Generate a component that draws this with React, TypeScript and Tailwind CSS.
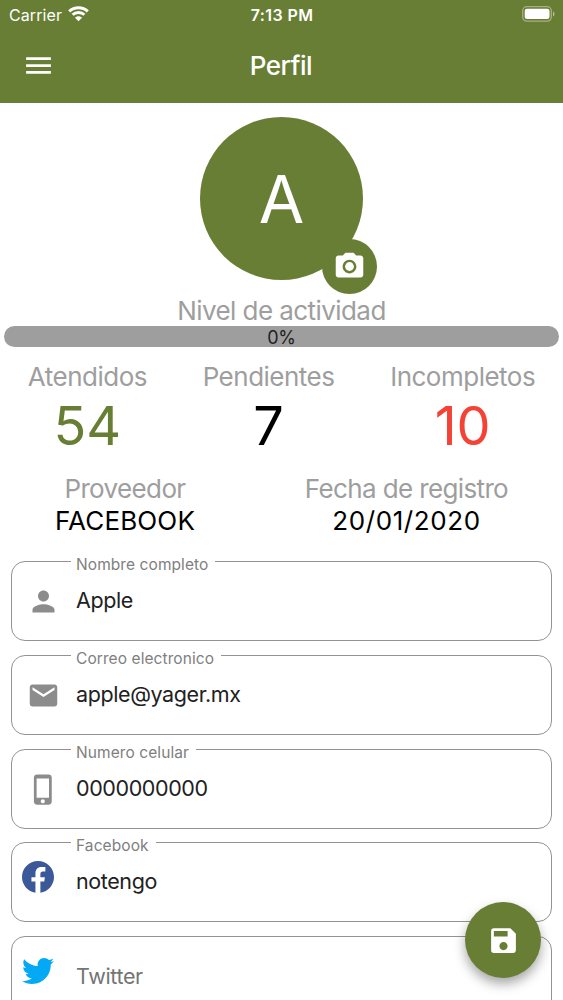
import React from 'react';
import { MdCameraAlt, MdEmail, MdMenu, MdPerson, MdPhoneIphone, MdSave } from 'react-icons/md';
import { FaTwitter } from 'react-icons/fa';

const stats = [
  { label: 'Atendidos', value: '54', color: 'text-[#687e34]' },
  { label: 'Pendientes', value: '7', color: 'text-black' },
  { label: 'Incompletos', value: '10', color: 'text-[#f44336]' },
];

const details = [
  { label: 'Proveedor', value: 'FACEBOOK', tracking: 'tracking-[0.15px]' },
  { label: 'Fecha de registro', value: '20/01/2020', tracking: 'tracking-[0.6px]' },
];

const StatusBar: React.FC = () => (
  <div className="flex h-[28px] items-center justify-between pl-[9px] pr-[8px]">
    <div className="flex w-[180px] items-center gap-[6px]">
      <span className="pt-px text-[16px] tracking-[0.1px]">Carrier</span>
      <svg width="21" height="16" viewBox="0 0 21 16" fill="none" stroke="currentColor">
        <path d="M1.2 5.3C6.4 0.4 14.6 0.4 19.8 5.3" strokeWidth="3" />
        <path d="M4.6 8.8C7.8 5.7 13.2 5.7 16.4 8.8" strokeWidth="2.9" />
        <path d="M10.5 15.2L7 11.7C9 9.7 12 9.7 14 11.7Z" fill="currentColor" stroke="none" />
      </svg>
    </div>
    <span className="pt-px text-[16px] font-semibold tracking-[0.4px]">7:13 PM</span>
    <div className="flex w-[180px] justify-end">
      <svg width="33" height="16" viewBox="0 0 33 16" fill="none">
        <rect x="0.7" y="0.7" width="28.6" height="14.4" rx="4" stroke="#fff" strokeOpacity="0.4" strokeWidth="1.3" />
        <rect x="2.7" y="2.7" width="24.8" height="10.4" rx="2.3" fill="#fff" />
        <path d="M31 5.4c2 .9 2 4 0 5z" fill="#fff" fillOpacity="0.5" />
      </svg>
    </div>
  </div>
);

const FacebookIcon: React.FC = () => (
  <svg width="32" height="32" viewBox="2 2 20 20" fill="#3b5998" className="mt-[18px]">
    <path d="M22 12c0-5.52-4.48-10-10-10S2 6.48 2 12c0 4.9 3.6 9.1 8.4 9.9v-7.1H7.9v-2.6h2.5V9.9c0-2.6 1.4-4.1 3.7-4.1h2.5v2.8h-1.5c-1.2 0-1.6.6-1.6 1.5v2.1h2.8l-.4 2.6h-2.4v7.1C18.4 21.1 22 16.9 22 12z" />
  </svg>
);

interface FieldProps {
  icon: React.ReactNode;
  label: string;
  value?: string;
}

const Field: React.FC<FieldProps> = ({ icon, label, value }) => (
  <div className="relative flex h-[80px] shrink-0 rounded-[14px] border border-[#939393]">
    <div className="flex w-[64px] shrink-0 pl-[10px] text-[#8c8c8c]">{icon}</div>
    {value ? (
      <>
        <label className="absolute left-[59px] top-[-7px] bg-white pl-[5px] pr-[7px] text-[15.5px] leading-[20px] tracking-[0.08px] text-[#808080]">
          {label}
        </label>
        <span className="pt-[24px] text-[21.5px] leading-[28px] tracking-[-0.4px] text-[#212121]">{value}</span>
      </>
    ) : (
      <span className="pt-[25px] text-[21.5px] leading-[28px] tracking-[-0.35px] text-[#757575]">{label}</span>
    )}
  </div>
);

const App: React.FC = () => {
  return (
    <div className="relative h-[1000px] w-[563px] overflow-hidden bg-white font-['Inter',sans-serif]">
      <header className="h-[103px] bg-[#687e34] text-white">
        <StatusBar />
        <div className="flex h-[75px] items-center justify-between px-[22px]">
          <MdMenu size={33} />
          <h1 className="pr-px text-[26px] font-medium tracking-[-0.5px]">Perfil</h1>
          <div className="w-[33px]" />
        </div>
      </header>

      <main>
        <div className="flex justify-center pt-[14px]">
          <div className="relative flex h-[163px] w-[163px] items-center justify-center rounded-full bg-[#687e34] text-white">
            <span className="text-[66px] leading-none">A</span>
            <button className="absolute left-[122px] top-[122px] flex h-[55px] w-[55px] items-center justify-center rounded-full bg-[#687e34]">
              <MdCameraAlt size={33} />
            </button>
          </div>
        </div>

        {/* Activity level */}
        <p className="mt-[15px] text-center text-[26px] leading-[31px] tracking-[-0.57px] text-[#9e9e9e]">Nivel de actividad</p>
        <div className="mx-1 flex h-[21px] items-center justify-center rounded-full bg-[#9e9e9e] pt-[2px] text-[18px] leading-[19px] tracking-[-0.3px] text-[#212121]">
          0%
        </div>

        <div className="mt-[14px] flex justify-around">
          {stats.map((stat) => (
            <div key={stat.label} className="flex flex-col items-center">
              <span className="text-[26px] leading-[32px] tracking-[-0.5px] text-[#9e9e9e]">{stat.label}</span>
              <span className={`text-[54px] leading-[65px] ${stat.color}`}>{stat.value}</span>
            </div>
          ))}
        </div>

        <div className="mt-[15px] flex justify-around">
          {details.map((detail) => (
            <div key={detail.label} className="flex flex-col items-center text-[26px] leading-[32px]">
              <span className="tracking-[-0.63px] text-[#9e9e9e]">{detail.label}</span>
              <span className={`text-black ${detail.tracking}`}>{detail.value}</span>
            </div>
          ))}
        </div>

        <div className="mt-[24px] flex flex-col gap-[13.75px] px-[11px]">
          <Field icon={<MdPerson size={33} className="ml-[5px] mt-[23px]" />} label="Nombre completo" value="Apple" />
          <Field icon={<MdEmail size={33} className="ml-[5px] mt-[23px]" />} label="Correo electronico" value="apple@yager.mx" />
          <Field icon={<MdPhoneIphone size={33} className="ml-[5px] mt-[23px]" />} label="Numero celular" value="0000000000" />
          <Field icon={<FacebookIcon />} label="Facebook" value="notengo" />
          <Field icon={<FaTwitter size={32} className="mt-[18px] text-[#03a9f4]" />} label="Twitter" />
        </div>
      </main>

      <button className="absolute left-[465px] top-[902px] flex h-[76px] w-[76px] items-center justify-center rounded-full bg-[#687e34] text-white shadow-[0_6px_12px_rgba(0,0,0,0.35)]">
        <MdSave size={33} />
      </button>
    </div>
  );
};

export default App;
